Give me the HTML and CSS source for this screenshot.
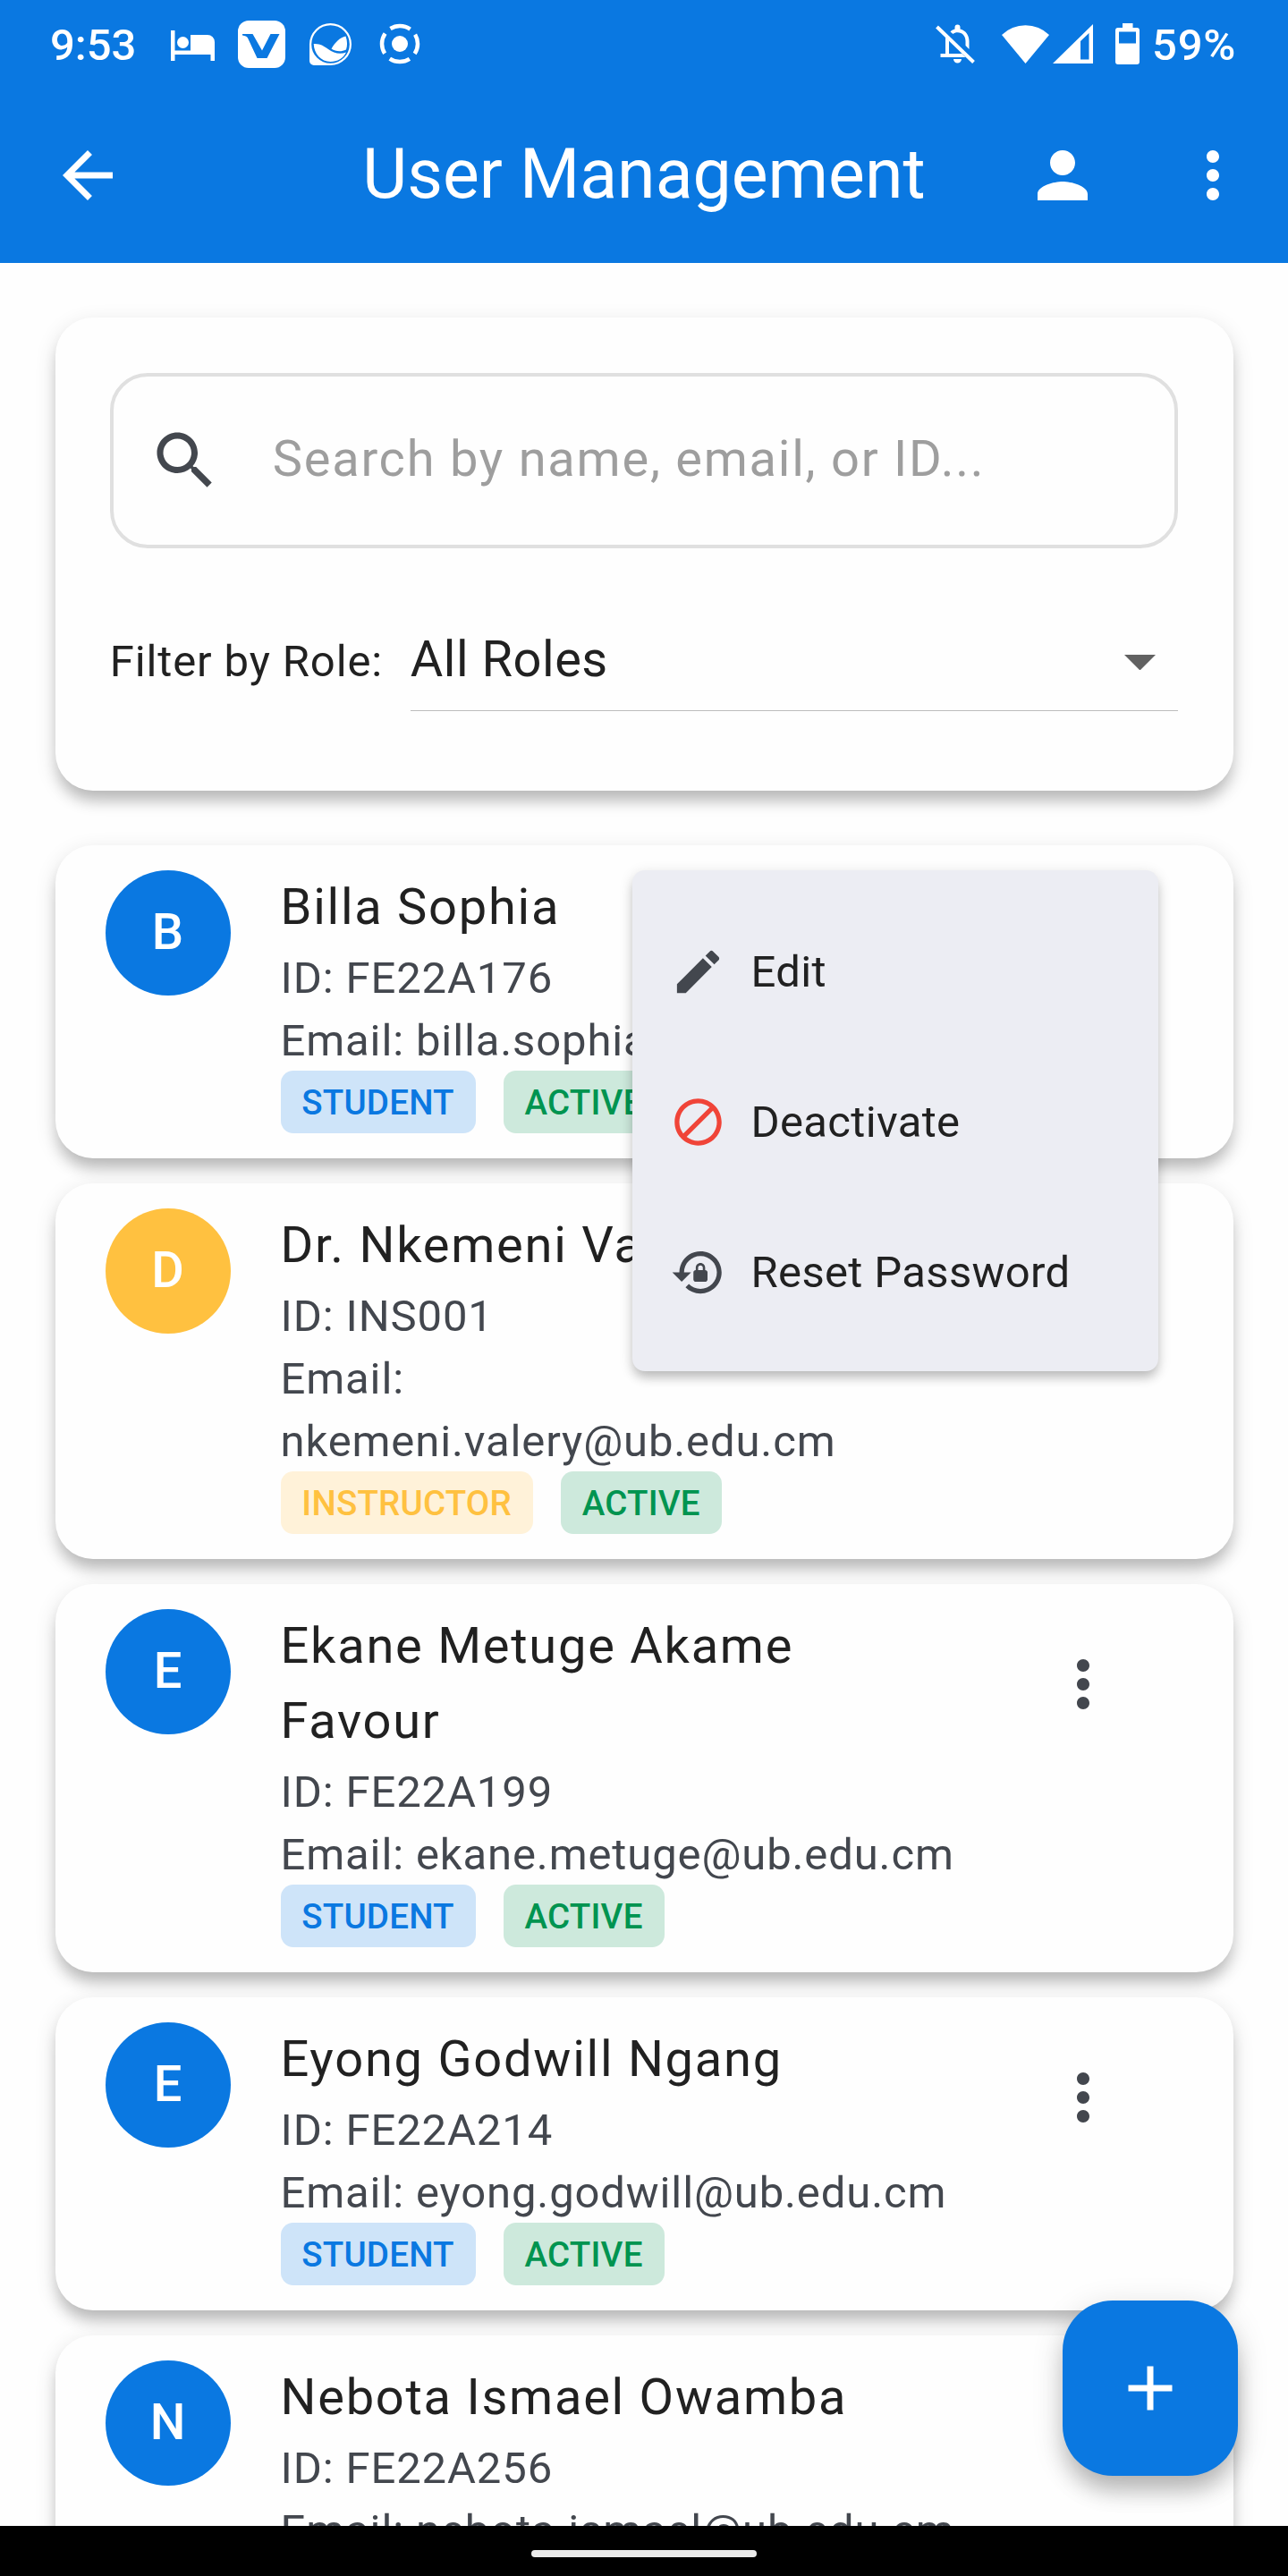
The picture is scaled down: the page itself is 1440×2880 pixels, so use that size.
FILE: index.html
```html
<!DOCTYPE html>
<html lang="en">
<head>
<meta charset="utf-8">
<title>User Management</title>
<link rel="stylesheet" href="styles.css">
</head>
<body>
<svg width="0" height="0" class="sprite" aria-hidden="true">
  <symbol id="more" viewBox="0 0 24 24"><path d="M12 8c1.1 0 2-.9 2-2s-.9-2-2-2-2 .9-2 2 .9 2 2 2zm0 2c-1.1 0-2 .9-2 2s.9 2 2 2 2-.9 2-2-.9-2-2-2zm0 6c-1.1 0-2 .9-2 2s.9 2 2 2 2-.9 2-2-.9-2-2-2z"/></symbol>
</svg>
<div class="screen">
  <header class="header">
    <div class="status">
      <div class="status-left">
        <span class="clock">9:53</span>
        <svg class="ic-bed" viewBox="0 0 49 34"><path d="M0 0h4.500v22.500h17.500V5h19a8 8 0 0 1 8 8v21h-4.500v-7h-40v7H0z"/><circle cx="13.500" cy="13.500" r="6.500"/></svg>
        <svg class="ic-v" viewBox="0 0 53 53"><rect width="53" height="53" rx="12"/><path class="cut" d="M5 15h11.500L27 33.500 36.500 15h10L32.500 42H21.500L11 19.500C10 17.500 8 17 5 16.500z"/></svg>
        <svg class="ic-wave" viewBox="0 0 48 47"><path fill-rule="evenodd" d="M23.500 0a23.500 23.500 0 0 1 0 47H5a5 5 0 0 1-5-5V23.500A23.500 23.500 0 0 1 23.500 0zM23.500 2.200a21.300 21.300 0 1 0 0 42.600a21.300 21.300 0 0 0 0-42.600z"/><path d="M4.700 23C12 22.500 16 25.500 21 29c6 4.500 13 6 20 3.500C38 39 31 43 23.500 43 13 43 5 34 4.700 23zM24.500 28.500C29 21 34 16 40.500 14.500 42.500 20 42.500 25 41 29.500 35 32.500 29 31.500 24.500 28.500z"/></svg>
        <svg class="ic-cast" viewBox="0 0 46 46"><circle cx="23" cy="23" r="9"/><circle cx="23" cy="23" r="20" class="ring"/></svg>
      </div>
      <div class="status-right">
        <svg class="ic-bell" viewBox="0 0 44 44"><path d="M1.500 3l41 39.500" class="line"/><path d="M16.500 8.500C18 7 20 6 21.500 5.600V3.500a3 3 0 0 1 6 0v2.100C34 7.200 37.500 13 37.500 19v9l-4-4v-5c0-5.500-3.500-9.700-9-9.700-2 0-3.700.6-5 1.700zM11 14.500l4 4V33h14.500l4 4H5.500v-4h5.500zM20 39h9a4.500 4.500 0 0 1-9 0z"/></svg>
        <svg class="ic-wifi" viewBox="0 0 53 44"><path d="M0 12A38 38 0 0 1 53 12L26.500 44z"/></svg>
        <svg class="ic-signal" viewBox="0 0 45 44"><path fill-rule="evenodd" d="M0 44L45 0v44zM31 19v20.500h9.500V10z"/></svg>
        <svg class="ic-battery" viewBox="0 0 27 46"><path fill-rule="evenodd" d="M8 0h11.500v5H24a3 3 0 0 1 3 3v35a3 3 0 0 1-3 3H3a3 3 0 0 1-3-3V8a3 3 0 0 1 3-3h5zM4 9.500v13h19v-13z"/></svg>
        <span class="charge">59%</span>
      </div>
    </div>
    <div class="appbar">
      <div class="appbar-btn lead"><svg class="icon" viewBox="0 0 24 24"><path d="M20 11H7.830l5.590-5.590L12 4l-8 8 8 8 1.410-1.410L7.830 13H20v-2z"/></svg></div>
      <h1 class="title">User Management</h1>
      <div class="appbar-actions">
        <div class="appbar-btn"><svg class="icon" viewBox="0 0 24 24"><path d="M12 12c2.210 0 4-1.790 4-4s-1.790-4-4-4-4 1.790-4 4 1.790 4 4 4zm0 2c-2.670 0-8 1.340-8 4v2h16v-2c0-2.660-5.330-4-8-4z"/></svg></div>
        <div class="appbar-btn"><svg class="icon"><use href="#more"/></svg></div>
      </div>
    </div>
  </header>

  <main class="content">
    <section class="card filters">
      <div class="search">
        <svg class="icon" viewBox="0 0 24 24"><path d="M15.500 14h-.79l-.28-.27C15.410 12.590 16 11.110 16 9.500 16 5.910 13.090 3 9.500 3S3 5.910 3 9.500 5.910 16 9.500 16c1.610 0 3.090-.59 4.230-1.570l.27.28v.79l5 4.990L20.490 19l-4.990-5zm-6 0C7.010 14 5 11.990 5 9.500S7.010 5 9.500 5 14 7.010 14 9.500 11.990 14 9.500 14z"/></svg>
        <span class="placeholder">Search by name, email, or ID...</span>
      </div>
      <div class="role-row">
        <span class="role-label">Filter by Role:</span>
        <div class="select">
          <span>All Roles</span>
          <svg class="caret" viewBox="0 0 35 17.500"><path d="M0 0h35L17.500 17.500z"/></svg>
        </div>
      </div>
    </section>

    <div class="list">
      <article class="card user">
        <div class="avatar">B</div>
        <div class="info">
          <h2>Billa Sophia</h2>
          <p>ID: FE22A176</p>
          <p>Email: billa.sophia@ub.edu.cm</p>
          <div class="chips"><span class="chip student">STUDENT</span><span class="chip active">ACTIVE</span></div>
        </div>
        <div class="more"><svg class="icon"><use href="#more"/></svg></div>
        <div class="menu">
          <div class="menu-item"><svg viewBox="0 0 24 24"><path d="M3 17.250V21h3.750L17.810 9.940l-3.750-3.750L3 17.250zM20.710 7.040c.39-.39.39-1.020 0-1.410l-2.340-2.340c-.39-.39-1.020-.39-1.410 0l-1.830 1.830 3.750 3.750 1.830-1.830z"/></svg>Edit</div>
          <div class="menu-item"><svg class="danger" viewBox="0 0 24 24"><path d="M12 2C6.480 2 2 6.480 2 12s4.480 10 10 10 10-4.480 10-10S17.520 2 12 2zM4 12c0-4.420 3.580-8 8-8 1.850 0 3.550.63 4.900 1.690L5.690 16.900C4.630 15.550 4 13.850 4 12zm8 8c-1.850 0-3.550-.63-4.900-1.690L18.310 7.100C19.370 8.450 20 10.150 20 12c0 4.420-3.580 8-8 8z"/></svg>Deactivate</div>
          <div class="menu-item"><svg viewBox="0 0 24 24"><path d="M13 3c-4.970 0-9 4.030-9 9H1l4 3.990L9 12H6c0-3.870 3.130-7 7-7s7 3.130 7 7-3.130 7-7 7c-1.930 0-3.680-.79-4.940-2.060l-1.420 1.420C8.270 19.990 10.510 21 13 21c4.970 0 9-4.030 9-9s-4.030-9-9-9zm2 8v-1c0-1.100-.9-2-2-2s-2 .9-2 2v1c-.55 0-1 .45-1 1v3c0 .55.45 1 1 1h4c.55 0 1-.45 1-1v-3c0-.55-.45-1-1-1zm-1 0h-2v-1c0-.55.45-1 1-1s1 .45 1 1v1z"/></svg>Reset Password</div>
        </div>
      </article>

      <article class="card user">
        <div class="avatar gold">D</div>
        <div class="info">
          <h2>Dr. Nkemeni Valery</h2>
          <p>ID: INS001</p>
          <p>Email: nkemeni.valery@ub.edu.cm</p>
          <div class="chips"><span class="chip instructor">INSTRUCTOR</span><span class="chip active">ACTIVE</span></div>
        </div>
        <div class="more"><svg class="icon"><use href="#more"/></svg></div>
      </article>

      <article class="card user">
        <div class="avatar">E</div>
        <div class="info">
          <h2>Ekane Metuge Akame Favour</h2>
          <p>ID: FE22A199</p>
          <p>Email: ekane.metuge@ub.edu.cm</p>
          <div class="chips"><span class="chip student">STUDENT</span><span class="chip active">ACTIVE</span></div>
        </div>
        <div class="more"><svg class="icon"><use href="#more"/></svg></div>
      </article>

      <article class="card user">
        <div class="avatar">E</div>
        <div class="info">
          <h2>Eyong Godwill Ngang</h2>
          <p>ID: FE22A214</p>
          <p>Email: eyong.godwill@ub.edu.cm</p>
          <div class="chips"><span class="chip student">STUDENT</span><span class="chip active">ACTIVE</span></div>
        </div>
        <div class="more"><svg class="icon"><use href="#more"/></svg></div>
      </article>

      <article class="card user">
        <div class="avatar">N</div>
        <div class="info">
          <h2>Nebota Ismael Owamba</h2>
          <p>ID: FE22A256</p>
          <p>Email: nebota.ismael@ub.edu.cm</p>
        </div>
      </article>
    </div>
    <div class="fab"><svg class="icon" viewBox="0 0 24 24"><path d="M19 13h-6v6h-2v-6H5v-2h6V5h2v6h6v2z"/></svg></div>
  </main>

  <footer class="navbar"><div class="pill"></div></footer>
</div>
</body>
</html>
```

FILE: styles.css
```css
* { box-sizing: border-box; }

body {
  margin: 0;
  font-family: Roboto, "Liberation Sans", sans-serif;
  color: #212121;
  background: #fefefe;
}

h1, h2, p { margin: 0; font-weight: 400; }

svg { display: block; flex: none; fill: currentColor; }
.sprite { position: absolute; }

.screen {
  width: 1440px;
  height: 2880px;
  display: flex;
  flex-direction: column;
  overflow: hidden;
}

/* header */
.header { height: 294px; flex: none; background: #0a78e1; color: #fff; }

.status {
  height: 98px;
  padding: 0 58px 0 56px;
  display: flex;
  justify-content: space-between;
  align-items: center;
}
.status-left, .status-right { display: flex; align-items: center; }
.clock, .charge { font-size: 49px; font-weight: 500; line-height: 60px; padding-top: 4px; }
.clock { width: 135px; }
.charge { width: 94px; margin-left: 14px; letter-spacing: 0.8px; white-space: nowrap; }
.ic-bed { width: 49px; height: 34px; margin-top: 3px; }
.ic-v { width: 53px; height: 53px; margin-left: 26px; }
.ic-v .cut { fill: #0a78e1; }
.ic-wave { width: 48px; height: 47px; margin-left: 27px; }
.ic-cast { width: 46px; height: 46px; margin-left: 30px; }
.ring { fill: none; stroke: #fff; stroke-width: 4.500; stroke-dasharray: 23.400 8.016; stroke-dashoffset: 11.700; }
.line { fill: none; stroke: #fff; stroke-width: 4; }
.ic-bell { width: 44px; height: 44px; }
.ic-wifi { width: 53px; height: 44px; margin-left: 30px; }
.ic-signal { width: 45px; height: 44px; margin-left: 4px; }
.ic-battery { width: 27px; height: 46px; margin-left: 25px; }

.appbar {
  height: 196px;
  display: grid;
  grid-template-columns: 1fr auto 1fr;
  align-items: center;
}
.title { font-size: 77px; line-height: 98px; padding-bottom: 3px; white-space: nowrap; }
.icon { width: 84px; height: 84px; }
.appbar-btn { width: 168px; height: 168px; display: flex; align-items: center; justify-content: center; }
.appbar-btn.lead { width: 196px; }
.appbar-actions { display: flex; justify-content: flex-end; }

/* content */
.content {
  flex: 1;
  min-height: 0;
  overflow: hidden;
  position: relative;
  padding: 61.25px 61.5px;
  display: flex;
  flex-direction: column;
  gap: 61.25px;
}

.card {
  flex: none;
  background: #fefefe;
  border-radius: 42px;
  box-shadow: 0 14px 16px -3px rgba(0, 0, 0, 0.2), 0 7px 24px rgba(0, 0, 0, 0.12);
}

.filters { height: 528.75px; padding: 61.25px; }

.search {
  height: 196px;
  border: 4px solid #e0e0e0;
  border-radius: 42px;
  padding-left: 38px;
  display: flex;
  align-items: center;
  color: #43474e;
}
.placeholder { margin-left: 56px; padding-bottom: 4px; font-size: 56px; letter-spacing: 1.75px; color: #9e9e9e; }

.role-row { margin-top: 61.25px; display: flex; align-items: baseline; }
.role-label { width: 336px; font-size: 49px; letter-spacing: 0.875px; white-space: nowrap; }
.select {
  flex: 1;
  height: 121px;
  padding: 6px 25px 0 0;
  border-bottom: 1px solid #bdbdbd;
  display: flex;
  align-items: center;
  justify-content: space-between;
  font-size: 56px;
  letter-spacing: 0.525px;
}
.caret { width: 35px; height: 17.500px; margin-top: 7px; color: #616161; }

/* user rows */
.list { display: flex; flex-direction: column; gap: 28px; }

.user {
  position: relative;
  padding: 28px 84px 28px 56px;
  display: flex;
  align-items: flex-start;
}
.avatar {
  flex: none;
  width: 140px;
  height: 140px;
  border-radius: 50%;
  background: #0a78e1;
  color: #fff;
  font-size: 56px;
  font-weight: 500;
  line-height: 138px;
  text-align: center;
}
.avatar.gold { background: #ffc140; }
.info { flex: 1; margin: 0 56px; }
.info h2 { margin: -1px 0 3px; font-size: 56px; line-height: 84px; letter-spacing: 1.75px; }
.info p { font-size: 49px; line-height: 70px; letter-spacing: 0.875px; color: #43474e; }
.more { width: 168px; height: 168px; display: flex; align-items: center; justify-content: center; color: #43474e; }

.chips { margin-top: -2px; display: flex; gap: 31px; }
.chip {
  height: 70px;
  padding: 0 24px 0 23.800px;
  border-radius: 14px;
  font-size: 38.500px;
  font-weight: 500;
  line-height: 71px;
  letter-spacing: 0.200px;
}
.student { background: #cee4f9; color: #0a78e1; }
.active { background: #cde9dc; color: #009450; }
.instructor { background: #fff2d9; color: #ffc140; }

/* popup menu over the list */
.menu {
  position: absolute;
  z-index: 2;
  top: 28px;
  right: 84px;
  width: 588px;
  padding: 28px 0;
  border-radius: 14px;
  background: #ecedf3;
  box-shadow: 0 9px 12px -2px rgba(0, 0, 0, 0.18), 0 4px 16px rgba(0, 0, 0, 0.14);
}
.menu-item {
  height: 168px;
  padding: 2px 0 0 42px;
  display: flex;
  align-items: center;
  gap: 28px;
  font-size: 49px;
  letter-spacing: 0.350px;
}
.menu-item svg { width: 63px; height: 63px; color: #43474e; }
.menu-item svg.danger { color: #f04438; }

.fab {
  position: absolute;
  right: 56px;
  bottom: 56px;
  width: 196px;
  height: 196px;
  border-radius: 56px;
  background: #0a78e1;
  color: #fff;
  display: flex;
  align-items: center;
  justify-content: center;
  box-shadow: 0 20px 26px -4px rgba(0, 0, 0, 0.22), 0 8px 36px rgba(0, 0, 0, 0.14);
}

.navbar {
  height: 56px;
  flex: none;
  background: #000;
  display: flex;
  align-items: center;
  justify-content: center;
}
.pill { width: 252px; height: 8px; margin-top: 6px; border-radius: 4px; background: #ebebeb; }
```
